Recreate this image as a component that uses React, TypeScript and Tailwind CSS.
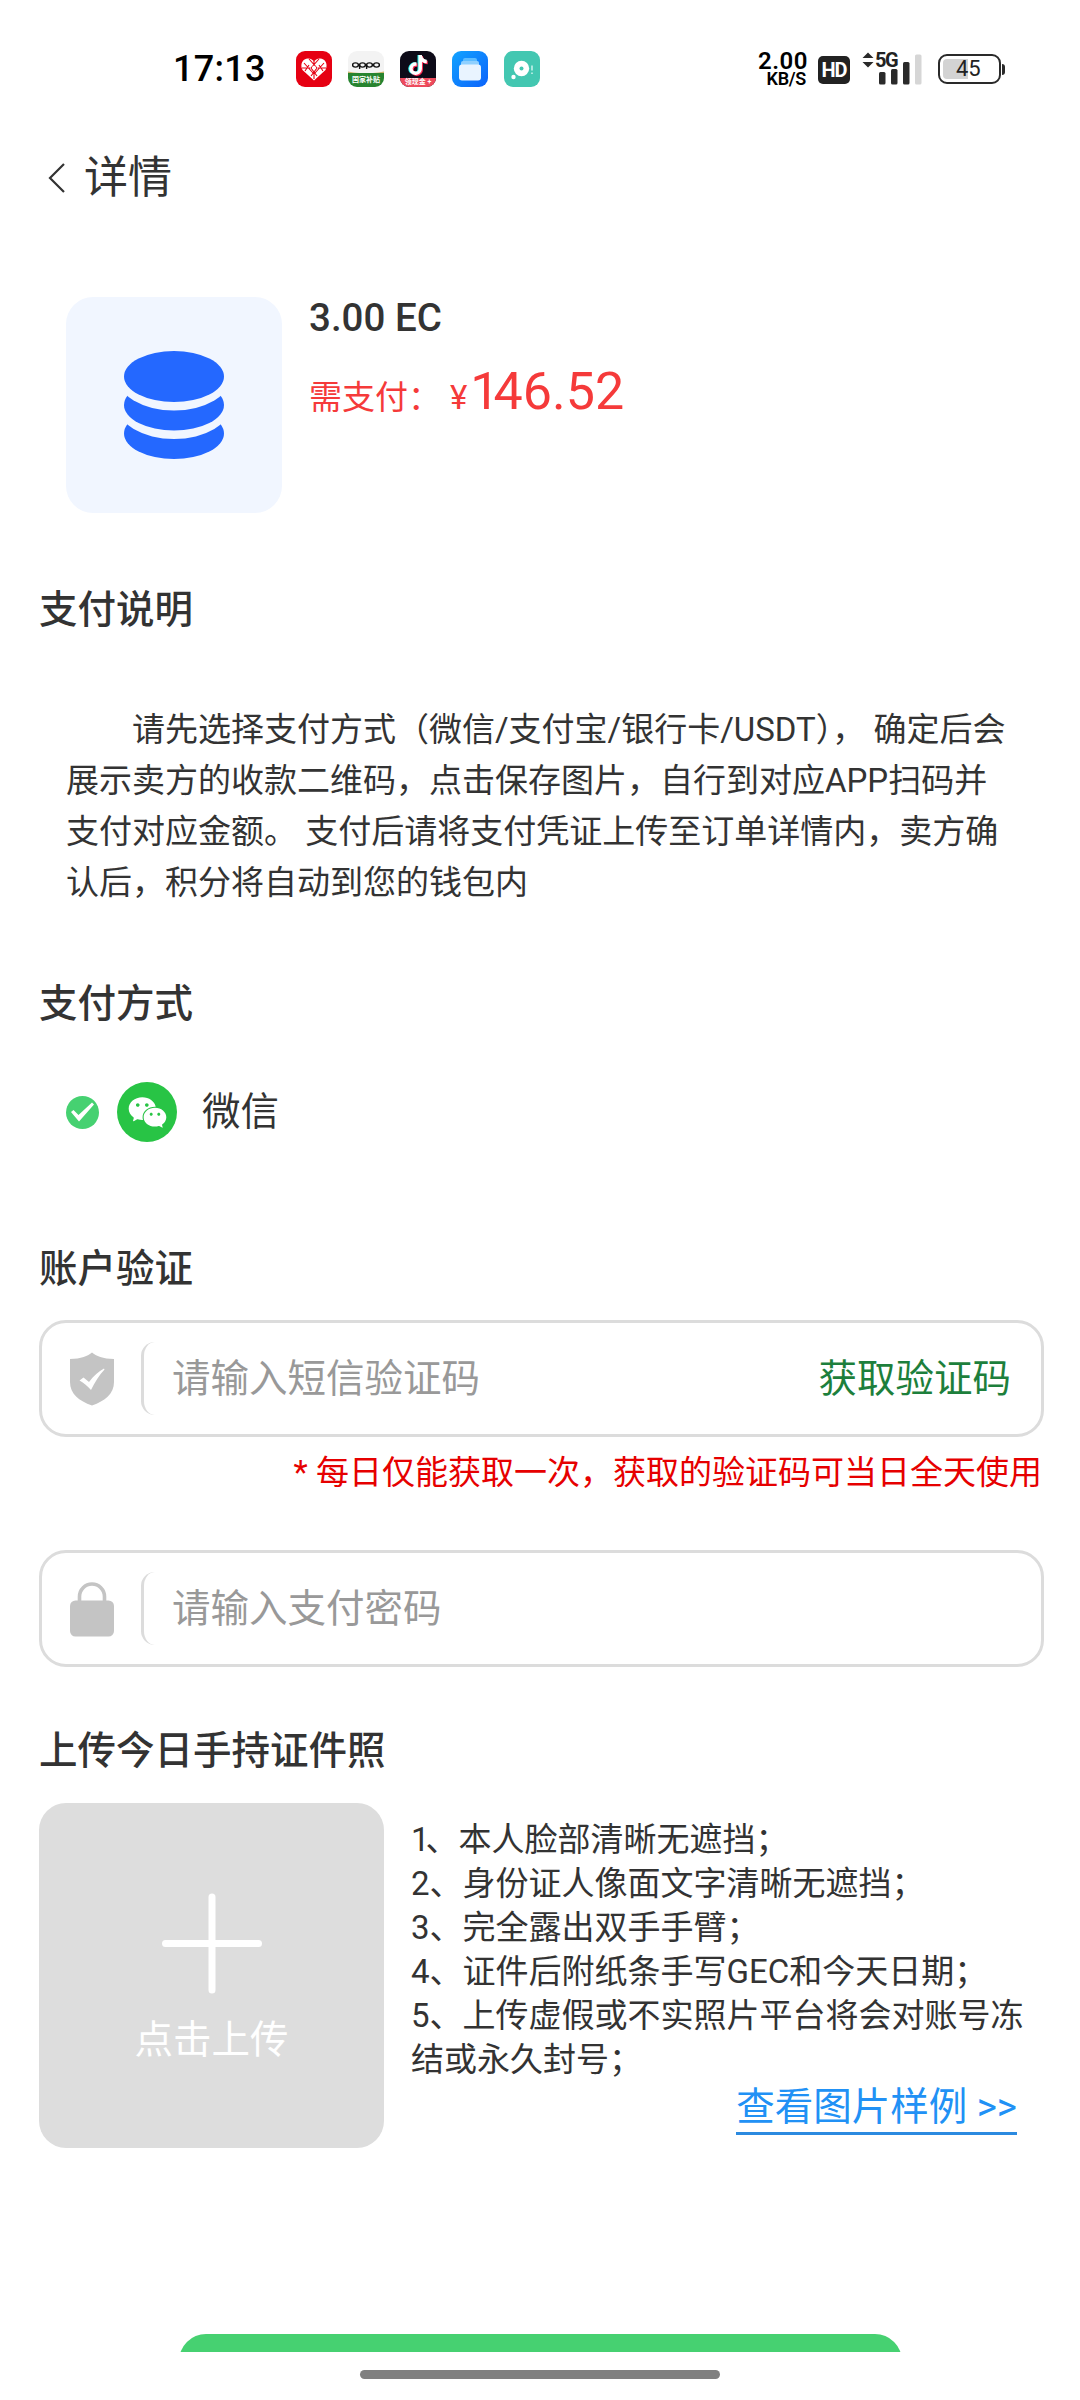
import React from 'react';
import { AiFillWechat } from 'react-icons/ai';
import { FaTiktok } from 'react-icons/fa';

const RULES = [
  { no: '2', text: '、身份证人像面文字清晰无遮挡；' },
  { no: '3', text: '、完全露出双手手臂；' },
  { no: '4', text: '、证件后附纸条手写GEC和今天日期；' },
  { no: '5', text: '、上传虚假或不实照片平台将会对账号冻' },
];

const AppIcons: React.FC = () => (
  <div className="ml-[31px] flex gap-4">
    {/* Pinduoduo */}
    <svg width="36" height="36" viewBox="0 0 36 36">
      <rect width="36" height="36" rx="9" fill="#e60012" />
      <path d="M18 29.5 6.5 19c-3-6 .5-11.500 5.500-11.500 3 0 5 1.500 6 3 1-1.500 3-3 6-3 5 0 8.500 5.500 5.500 11.500Z" fill="#fff" />
      <g stroke="#e60012" strokeWidth="1.100" fill="none">
        <path d="m8 12 9 10M13 8l8 9-6 8M28 12l-9 10M23 8l-8 9 6 8M6 17h8M22 17h8M18 10v4M18 22v6M9 20l4-6M27 20l-4-6" />
      </g>
      <circle cx="18" cy="16.500" r="1.800" fill="#fff" />
    </svg>
    {/* OPPO store */}
    <div className="flex h-9 w-9 flex-col overflow-hidden rounded-[9px] bg-[#f3f3f3]">
      <svg width="36" height="22" viewBox="0 0 36 22">
        <g fill="none" stroke="#111" strokeWidth="1.400">
          <ellipse cx="7.500" cy="14" rx="2.900" ry="2.100" />
          <ellipse cx="14.500" cy="14" rx="2.900" ry="2.100" />
          <ellipse cx="21.500" cy="14" rx="2.900" ry="2.100" />
          <ellipse cx="28.500" cy="14" rx="2.900" ry="2.100" />
          <path d="M11.600 14v4M18.600 14v4" />
        </g>
        <path d="M0 20.500q18 3.500 36 0V22H0Z" fill="#c9b46a" />
      </svg>
      <div className="flex h-[14px] items-center justify-center whitespace-nowrap bg-[#27842f] text-[7px] leading-none font-bold text-white">国家补贴</div>
    </div>
    {/* Douyin */}
    <div className="flex h-9 w-9 flex-col items-center overflow-hidden rounded-[9px] bg-[#0d0b18]">
      <div className="relative mt-1 h-[23px] w-[20px]">
        <FaTiktok size={20} className="absolute top-0 -left-px text-[#25f4ee]" />
        <FaTiktok size={20} className="absolute top-px left-px text-[#fe2c55]" />
        <FaTiktok size={20} className="absolute top-0 left-0 text-white" />
      </div>
      <div className="flex h-[9px] w-9 items-center justify-center whitespace-nowrap bg-[#ee4a5c] text-[7px] leading-none font-bold text-white">领现金 +</div>
    </div>
    {/* Files */}
    <svg width="36" height="36" viewBox="0 0 36 36">
      <defs>
        <linearGradient id="files" x1="0" y1="0" x2="1" y2="1">
          <stop offset="0" stopColor="#12a3ff" />
          <stop offset="1" stopColor="#0b62fb" />
        </linearGradient>
      </defs>
      <rect width="36" height="36" rx="9" fill="url(#files)" />
      <rect x="11" y="7" width="14" height="6" rx="2" fill="#5cbcff" />
      <rect x="9" y="10" width="18" height="6" rx="2" fill="#8fd0ff" />
      <rect x="7" y="13.500" width="22" height="16" rx="3" fill="#e9f4ff" />
    </svg>
    <svg width="36" height="36" viewBox="0 0 36 36">
      <rect width="36" height="36" rx="9" fill="#43c7b1" />
      <circle cx="17.500" cy="17.500" r="7.700" fill="#fff" />
      <circle cx="17.500" cy="17.500" r="2" fill="#43c7b1" />
      <circle cx="9.500" cy="26" r="2.200" fill="#fff" />
      <path d="M28 14.500v5M28 21.500v1.500" stroke="#c9f0ea" strokeWidth="1.600" />
    </svg>
  </div>
);

const StatusBar: React.FC = () => (
  <div className="flex h-[138px] items-center justify-between pr-[75px] pl-[173px]">
    <div className="flex items-center">
      <div className="w-[92px] whitespace-nowrap text-[36px] leading-9 font-medium tracking-[0.3px] text-black">17:13</div>
      <AppIcons />
    </div>
    <div className="flex items-center text-[#222]">
      <div className="flex w-[50px] flex-col items-end whitespace-nowrap text-black">
        <span className="text-[24px] leading-[20px] font-semibold tracking-[0.5px]">2.00</span>
        <span className="mr-0.5 text-[18px] leading-[16px] font-semibold tracking-[-0.3px]">KB/S</span>
      </div>
      <div className="ml-2.5 mt-0.5 flex h-7 w-8 items-center justify-center rounded-[5px] bg-[#222] text-[20px] leading-none font-bold tracking-[-1px] text-white">HD</div>
      <div className="relative ml-3 h-9 w-[62px]">
        <svg width="62" height="36" viewBox="0 0 62 36" fill="#2a2a2a">
          <path d="m6 1.500 5.500 5.500h-11zM6 16.500 11.500 11h-11z" />
          <rect x="17" y="21" width="6.500" height="12.500" rx="1.500" />
          <rect x="29" y="18" width="6.500" height="15.500" rx="1.500" />
          <rect x="41" y="11" width="6.500" height="22.500" rx="1.500" />
          <rect x="53" y="3.500" width="6.500" height="30" rx="1.500" fill="#d6d6d6" />
        </svg>
        <span className="absolute top-0 left-[13px] text-[20px] leading-[18px] font-bold tracking-[-1.500px]">5G</span>
      </div>
      <div className="ml-[14px] flex items-center">
        <div className="flex h-[30px] w-[63px] items-center rounded-[9px] border-[2.500px] border-[#2a2a2a] p-[3px]">
          <div className="h-full w-[25px] rounded-l-[4px] bg-[#d3d3d3]" />
          <span className="-ml-[12px] text-[22px] leading-none text-[#222]">45</span>
        </div>
        <div className="ml-px h-[11px] w-[3px] rounded-r-sm bg-[#2a2a2a]" />
      </div>
    </div>
  </div>
);

const SectionTitle: React.FC<{ className: string; children: React.ReactNode }> = ({ className, children }) => (
  <h2 className={`${className} ml-[39px] text-[38.500px] leading-[58px] font-medium whitespace-nowrap`}>{children}</h2>
);

const InputBox: React.FC<{ className: string; icon: React.ReactNode; placeholder: string; action?: string }> = ({
  className,
  icon,
  placeholder,
  action,
}) => (
  <div className={`${className} mx-[36px] ml-[39px] flex h-[117px] w-[1005px] items-center rounded-[27px] border-[3px] border-[#dcdcdc] pr-[30px] pl-[27px]`}>
    {icon}
    <div className="ml-[26px] flex h-[73px] flex-1 items-center rounded-[14px] border-l-[3px] border-[#dcdcdc] pl-[28px] text-[38.500px] text-[#999]">
      {placeholder}
    </div>
    {action && <span className="text-[38.500px] text-[#1d7f3c]">{action}</span>}
  </div>
);

const ShieldIcon = () => (
  <svg width="46" height="54" viewBox="0 0 46 54">
    <path d="M23 .5C27 4 34 7 45 7v23c0 12-9 19-22 23.500C10 49 1 42 1 30V7C12 7 19 4 23 .5Z" fill="#c4c4c4" />
    <path d="m10.500 28.500 4-3 5.500 4.500c5-6.500 9.500-10.500 15-13.500l.5 1C30 23.500 26 30 22 38c-3.500-4-7-7-11.500-9.500Z" fill="#fff" />
  </svg>
);

const LockIcon = () => (
  <svg width="46" height="56" viewBox="0 0 46 56">
    <path d="M10.500 24V15.500a12.500 12.500 0 0 1 25 0V24" fill="none" stroke="#c4c4c4" strokeWidth="3.600" />
    <rect x="1" y="19.500" width="44" height="36" rx="5.500" fill="#c4c4c4" />
  </svg>
);

export default function App() {
  return (
    <div className="flex h-[2400px] w-[1080px] flex-col overflow-hidden bg-white font-[Roboto,'Noto_Sans_CJK_SC',sans-serif] text-[#333]">
      <StatusBar />

      <div className="flex h-20 items-center pl-[48px]">
        <svg width="18" height="30" viewBox="0 0 18 30" fill="none" stroke="#333" strokeWidth="2.200">
          <path d="M16 1 2 15l14 14" />
        </svg>
        <h1 className="ml-[18px] text-[44px] leading-[60px]">详情</h1>
      </div>

      <div className="mt-[79px] flex pl-[66px]">
        <div className="flex h-[216px] w-[216px] items-center justify-center rounded-[27px] bg-[#f1f6ff]">
          <svg width="100" height="108" viewBox="0 0 100 108">
            <ellipse cx="50" cy="82.500" rx="50" ry="25.500" fill="#2468ff" />
            <ellipse cx="50" cy="54" rx="57" ry="34" fill="#f1f6ff" />
            <ellipse cx="50" cy="54" rx="50" ry="25.500" fill="#2468ff" />
            <ellipse cx="50" cy="25.500" rx="57" ry="34" fill="#f1f6ff" />
            <ellipse cx="50" cy="25.500" rx="50" ry="25.500" fill="#2468ff" />
          </svg>
        </div>
        <div className="ml-[27px] whitespace-nowrap">
          <div className="text-[38.500px] leading-[42px] font-medium">3.00 EC</div>
          <div className="mt-5 flex items-baseline text-[#f53a3a]">
            <span className="text-[33px] leading-[66px]">需支付：</span>
            <span className="ml-[9px] text-[33px]">¥</span>
            <span className="ml-[3px] text-[52px] leading-[66px]">
              <span className="tracking-[-6px]">1</span>46.52
            </span>
          </div>
        </div>
      </div>

      <SectionTitle className="mt-[68px]">支付说明</SectionTitle>
      <div className="mt-[65px] ml-[66px] whitespace-nowrap text-[33px] leading-[51px]">
        <p className="pl-[66px]">请先选择支付方式（微信/支付宝/银行卡/USDT）， 确定后会</p>
        <p>展示卖方的收款二维码，点击保存图片，自行到对应APP扫码并</p>
        <p>支付对应金额。 支付后请将支付凭证上传至订单详情内，卖方确</p>
        <p>认后，积分将自动到您的钱包内</p>
      </div>

      <SectionTitle className="mt-[67px]">支付方式</SectionTitle>
      <div className="mt-[49px] flex h-[60px] items-center pl-[66px]">
        <svg width="33" height="33" viewBox="0 0 33 33">
          <circle cx="16.500" cy="16.500" r="16.500" fill="#46d171" />
          <path d="m5 16 2.500-2 5 5L26 6.500l2 2L13 25.500Z" fill="#fff" />
        </svg>
        <div className="ml-[18px] flex h-[60px] w-[60px] items-center justify-center rounded-full bg-[#28c445]">
          <AiFillWechat size={43} className="text-white" />
        </div>
        <span className="ml-[25px] text-[38.500px]">微信</span>
      </div>

      <SectionTitle className="mt-[98px]">账户验证</SectionTitle>
      <InputBox className="mt-[22px]" icon={<ShieldIcon />} placeholder="请输入短信验证码" action="获取验证码" />
      <p className="mt-[11px] pr-[38px] text-right text-[33px] leading-[50px] whitespace-nowrap text-[#e60000]">
        * 每日仅能获取一次，获取的验证码可当日全天使用
      </p>
      <InputBox className="mt-[52px]" icon={<LockIcon />} placeholder="请输入支付密码" />

      <SectionTitle className="mt-[55px]">上传今日手持证件照</SectionTitle>
      <div className="mt-[23px] flex pl-[39px]">
        <div className="flex h-[345px] w-[345px] flex-col items-center rounded-[27px] bg-[#ddd] pt-[90px]">
          <svg width="100" height="101" viewBox="0 0 100 101" stroke="#fff" strokeWidth="7" strokeLinecap="round">
            <path d="M3.500 50.500h93M50 4v93" />
          </svg>
          <span className="mt-[17px] text-[38.500px] leading-[58px] text-white">点击上传</span>
        </div>
        <div className="ml-[27px] flex w-[606px] flex-col pt-[15px]">
          <div className="whitespace-nowrap text-[33px] leading-[44px]">
            <p>
              <span className="tracking-[-4px]">1</span>、本人脸部清晰无遮挡；
            </p>
            {RULES.map((rule) => (
              <p key={rule.no}>
                {rule.no}
                {rule.text}
              </p>
            ))}
            <p>结或永久封号；</p>
          </div>
          <a className="self-end border-b-[3px] border-[#2b8ae0] text-[38.500px] leading-[50px] whitespace-nowrap text-[#2191f5]">
            查看图片样例 &gt;&gt;
          </a>
        </div>
      </div>

      {/* submit button, cut off by the bottom of the scroll area */}
      <div className="mt-[186px] h-[18px] shrink-0 overflow-hidden">
        <div className="mx-auto h-[120px] w-[723px] rounded-[27px] bg-[#46d171]" />
      </div>
      <div className="mx-auto mt-[18px] h-[9px] w-[360px] shrink-0 rounded-full bg-[#808080]" />
    </div>
  );
}
